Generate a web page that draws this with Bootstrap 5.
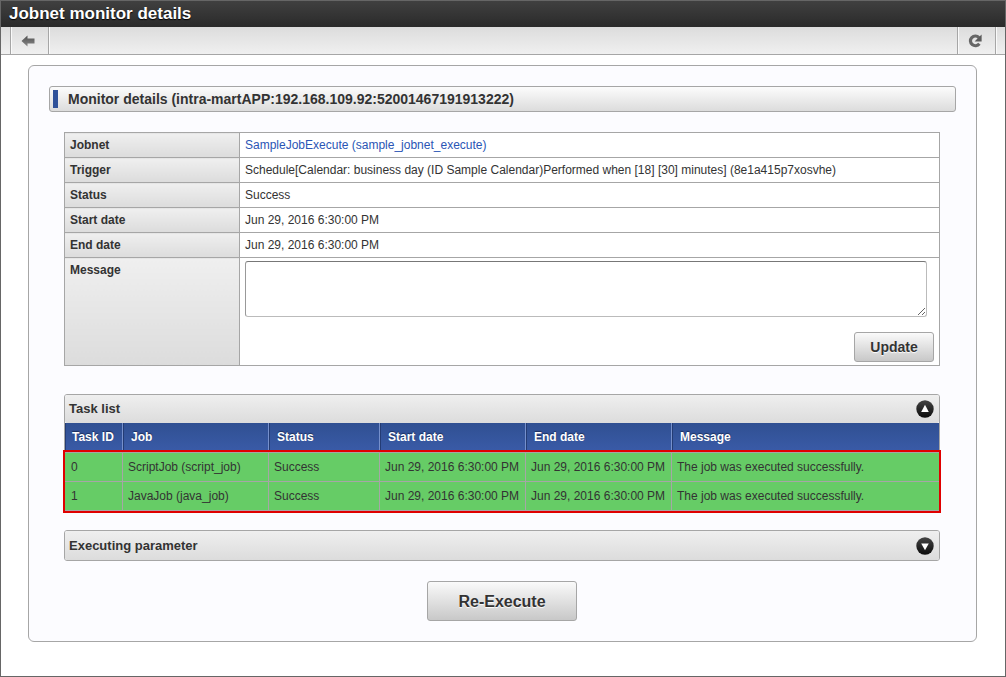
<!DOCTYPE html>
<html lang="en">
<head>
<meta charset="utf-8">
<meta name="viewport" content="width=device-width, initial-scale=1">
<title>Jobnet monitor details</title>
<link rel="stylesheet" href="https://cdn.jsdelivr.net/npm/bootstrap@5.3.0/dist/css/bootstrap.min.css">
<style>
:root { --line: #a6a6a6; --silver: linear-gradient(#efefef, #dcdcdc); }
body { font: 12px/16px "Liberation Sans", Arial, sans-serif; color: #333; background: #fff; }
.frame { border: 1px solid #666; }
.title-bar { height: 26px; padding: 0 8px; background: linear-gradient(#404040, #2a2a2a); color: #fff; }
.title-bar h1 { font-size: 17px; line-height: 26px; font-weight: 700; text-shadow: 0 1px 1px #000; }
.tool-bar { height: 28px; background: linear-gradient(#dcdcdc, #f0f0f0); border-bottom: 1px solid var(--line); padding: 0 9px; }
.tool-btn { width: 39px; padding: 0 3px 0 0; border: solid var(--line); border-width: 0 1px; background: none; box-shadow: inset 1px 0 #fafafa, 1px 0 #fafafa; }
.panel { margin: 10px 28px 34px 27px; padding: 20px; background: #fcfcff; border: 1px solid var(--line); border-radius: 6px; }
.heading-bar { height: 26px; padding: 0 3px; gap: 10px; border: 1px solid var(--line); border-radius: 3px; background: linear-gradient(#fcfcfc, #dcdcdc); }
.heading-bar h2 { font-size: 14px; line-height: 24px; font-weight: 700; }
.heading-mark { width: 5px; height: 18px; background: #30529a; }
.content-area { margin: 20px 16px 0 15px; }
.detail-table { width: 100%; margin-bottom: 28px; border-collapse: collapse; table-layout: fixed; background: #fff; }
.detail-table th, .detail-table td { height: 25px; border: 1px solid var(--line); padding: 4px 5px; vertical-align: top; }
.detail-table th { width: 175px; background: var(--silver); }
.detail-table a { color: #2a55b5; text-decoration: none; }
.detail-table td.message-cell { height: 108px; padding: 3px 5px; }
.message-box { height: 56px; width: calc(100% - 7px); border: 1px solid #bbb; border-top-color: #777; border-left-color: #999; border-radius: 3px; margin-bottom: 15px; }
.btn-silver { color: #333; font-weight: 700; border: 1px solid var(--line); border-radius: 3px; padding: 1px 0 0; background: linear-gradient(#fafafa, #c8c8c8); text-shadow: 0 1px 1px #fff; }
.btn-update { width: 80px; height: 30px; font-size: 14px; }
.btn-rerun { width: 150px; height: 40px; font-size: 16px; }
.fold { border: 1px solid var(--line); border-radius: 3px; margin-bottom: 18px; }
.fold-head { padding: 0 5px 0 4px; height: 28px; background: var(--silver); border-radius: 2px; }
.fold-head h3 { font-size: 13px; line-height: 28px; font-weight: 700; }
.fold-closed { margin-bottom: 20px; }
.fold-closed .fold-head { height: 29px; }
.task-table { width: 100%; table-layout: fixed; border-collapse: separate; border-spacing: 0; }
.task-table th { height: 29px; padding: 0 7px 2px; color: #fff; background: linear-gradient(#305092, #3a5ba8); border-left: 1px solid #243c74; border-right: 1px solid #7690cc; text-shadow: 0 -1px 1px #1c2f5c; white-space: nowrap; }
.task-table th:first-child { padding: 0 6px 2px; }
.task-table th:last-child { border-right: 0; }
.task-table tbody { outline: 2px solid #e00000; }
.task-table td { height: 29px; padding: 0 0 0 5px; background: #66cc66; border-top: 1px solid var(--line); border-right: 1px solid var(--line); white-space: nowrap; }
.task-table td:first-child { padding-left: 6px; }
.task-table td:last-child { border-right: 0; }
.task-table tr:last-child td { height: 30px; border-bottom: 1px solid var(--line); }
.col-id { width: 58px; } .col-date { width: 146px; } .col-status { width: 111px; }
</style>
</head>
<body>
<div class="frame min-vh-100">
  <header>
    <div class="title-bar"><h1 class="m-0">Jobnet monitor details</h1></div>
    <nav class="tool-bar d-flex justify-content-between" aria-label="Page tools">
      <button type="button" class="tool-btn d-flex align-items-center justify-content-center" aria-label="Back">
        <svg width="14" height="12" viewBox="0 0 14 12"><defs><linearGradient id="ag" x2="0" y2="1"><stop stop-color="#505050"/><stop offset="1" stop-color="#888"/></linearGradient></defs><path d="M0.5 6 6.5 0.5V3.5H13.5V8.5H6.5V11.5Z" fill="url(#ag)"/></svg>
      </button>
      <button type="button" class="tool-btn d-flex align-items-center justify-content-center" aria-label="Refresh">
        <svg width="14" height="14" viewBox="0 0 14 14"><path d="M11 3.6A5 4.7 0 1 0 11.4 9.8" fill="none" stroke="#666" stroke-width="3.2"/><path d="M13.6.6V7.4H6.6L9 5Z" fill="#5c5c5c"/></svg>
      </button>
    </nav>
  </header>
  <main class="panel">
    <div class="heading-bar d-flex align-items-center">
      <span class="heading-mark"></span>
      <h2 class="m-0">Monitor details (intra-martAPP:192.168.109.92:52001467191913222)</h2>
    </div>
    <div class="content-area">
      <table class="detail-table">
        <tr><th scope="row">Jobnet</th><td><a href="#">SampleJobExecute (sample_jobnet_execute)</a></td></tr>
        <tr><th scope="row">Trigger</th><td>Schedule[Calendar: business day (ID Sample Calendar)Performed when [18] [30] minutes] (8e1a415p7xosvhe)</td></tr>
        <tr><th scope="row">Status</th><td>Success</td></tr>
        <tr><th scope="row">Start date</th><td>Jun 29, 2016 6:30:00 PM</td></tr>
        <tr><th scope="row">End date</th><td>Jun 29, 2016 6:30:00 PM</td></tr>
        <tr><th scope="row"><label for="message">Message</label></th>
          <td class="message-cell">
            <textarea id="message" class="message-box d-block"></textarea>
            <div class="d-flex justify-content-end"><button type="button" class="btn btn-silver btn-update">Update</button></div>
          </td></tr>
      </table>

      <section class="fold">
        <div class="fold-head d-flex align-items-center justify-content-between">
          <h3 class="m-0">Task list</h3>
          <button type="button" class="btn p-0 border-0 d-flex" aria-label="Collapse task list">
            <svg width="18" height="18" viewBox="0 0 18 18"><defs><linearGradient id="cg" x2="0" y2="1"><stop stop-color="#444"/><stop offset="1" stop-color="#0c0c0c"/></linearGradient></defs><circle cx="9" cy="9" r="8.7" fill="url(#cg)"/><path d="M9 4.8 12.8 12H5.2Z" fill="#fff"/></svg>
          </button>
        </div>
        <table class="task-table">
          <colgroup><col class="col-id"><col class="col-date"><col class="col-status"><col class="col-date"><col class="col-date"><col></colgroup>
          <thead><tr><th scope="col">Task ID</th><th scope="col">Job</th><th scope="col">Status</th><th scope="col">Start date</th><th scope="col">End date</th><th scope="col">Message</th></tr></thead>
          <tbody>
            <tr><td>0</td><td>ScriptJob (script_job)</td><td>Success</td><td>Jun 29, 2016 6:30:00 PM</td><td>Jun 29, 2016 6:30:00 PM</td><td>The job was executed successfully.</td></tr>
            <tr><td>1</td><td>JavaJob (java_job)</td><td>Success</td><td>Jun 29, 2016 6:30:00 PM</td><td>Jun 29, 2016 6:30:00 PM</td><td>The job was executed successfully.</td></tr>
          </tbody>
        </table>
      </section>

      <section class="fold fold-closed">
        <div class="fold-head d-flex align-items-center justify-content-between">
          <h3 class="m-0">Executing parameter</h3>
          <button type="button" class="btn p-0 border-0 d-flex" aria-label="Expand executing parameter">
            <svg width="18" height="18" viewBox="0 0 18 18"><circle cx="9" cy="9" r="8.7" fill="url(#cg)"/><path d="M9 13.2 5.2 6.5H12.8Z" fill="#fff"/></svg>
          </button>
        </div>
      </section>
      <div class="d-flex justify-content-center"><button type="button" class="btn btn-silver btn-rerun">Re-Execute</button></div>
    </div>
  </main>
</div>
<script src="https://cdn.jsdelivr.net/npm/bootstrap@5.3.0/dist/js/bootstrap.bundle.min.js"></script>
</body>
</html>
